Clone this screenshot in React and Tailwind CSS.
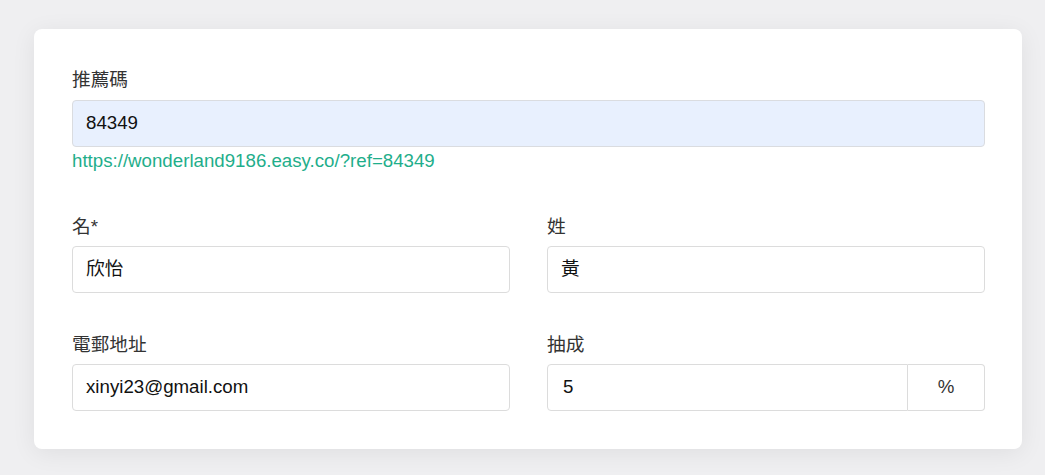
export default function App() {
  return (
    <div
      className="min-h-screen bg-[#efeff1] pt-[29px] pl-[34px]"
      style={{ fontFamily: '"Liberation Sans", "Noto Sans CJK TC", sans-serif' }}
    >
      <div className="w-[988px] h-[420px] bg-white rounded-lg shadow-[0_4px_24px_rgba(0,0,0,0.07)] pl-[38px] pr-[37px] pt-[39px] text-[18.7px]">
        <label className="block leading-6 text-[#333]">推薦碼</label>
        <div className="mt-2 h-[47px] rounded border border-[#dadce0] bg-[#e8f0fe] flex items-center px-[13px] text-[#111]">
          84349
        </div>
        <div className="leading-6 mt-[2px] text-[#1fae8b]">https://wonderland9186.easy.co/?ref=84349</div>

        <div className="grid grid-cols-2 gap-x-[37px] gap-y-[40px] mt-[42px]">
          <div>
            <label className="block leading-6 text-[#333]">名*</label>
            <div className="mt-[7px] h-[47px] rounded border border-[#dcdcdc] flex items-center px-[13px] text-[#111]">欣怡</div>
          </div>
          <div>
            <label className="block leading-6 text-[#333]">姓</label>
            <div className="mt-[7px] h-[47px] rounded border border-[#dcdcdc] flex items-center px-[13px] text-[#111]">黃</div>
          </div>
          <div>
            <label className="block leading-6 text-[#333]">電郵地址</label>
            <div className="mt-[7px] h-[47px] rounded border border-[#dcdcdc] flex items-center px-[13px] text-[#111]">xinyi23@gmail.com</div>
          </div>
          <div>
            <label className="block leading-6 text-[#333]">抽成</label>
            <div className="mt-[7px] h-[47px] flex">
              <div className="flex-1 rounded-l border border-[#dcdcdc] flex items-center px-[15px] text-[#111]">5</div>
              <div className="w-[77px] rounded-r border border-l-0 border-[#dcdcdc] flex items-center justify-center text-[#333]">%</div>
            </div>
          </div>
        </div>
      </div>
    </div>
  );
}
